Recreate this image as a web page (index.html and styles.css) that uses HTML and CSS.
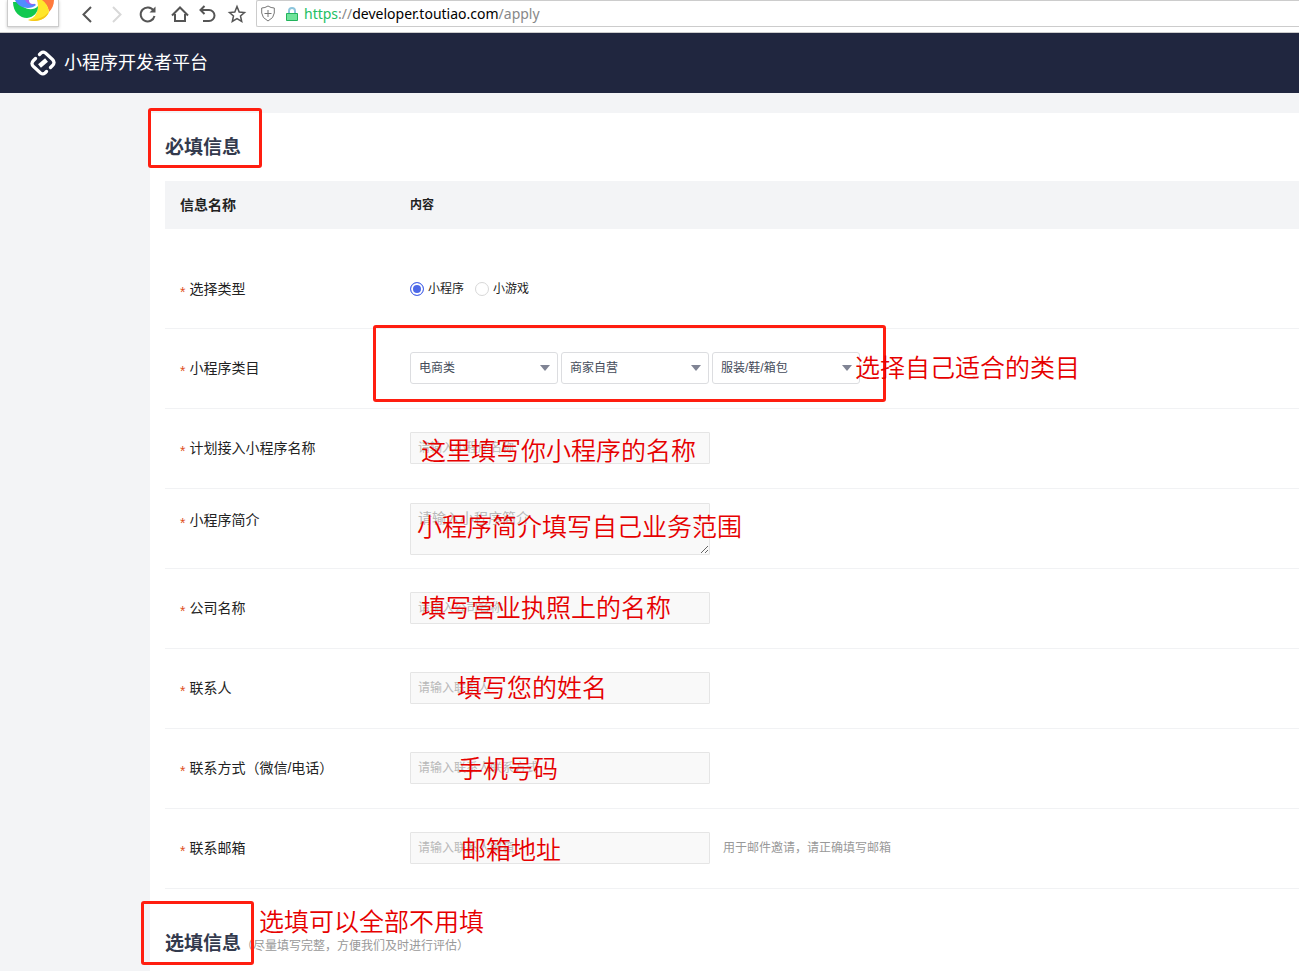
FILE: index.html
```html
<!DOCTYPE html>
<html lang="zh-CN">
<head>
<meta charset="utf-8">
<title>小程序开发者平台</title>
<link rel="stylesheet" href="styles.css">
</head>
<body>
<div class="browser">
  <div class="brand">
    <svg width="42" height="24" viewBox="0 0 42 24" aria-hidden="true">
      <path d="M27 0H41C41 5 39 9 36 12Q35 4 27 0Z" fill="#ff7a3c"/>
      <path d="M24 0H29Q35 4 36 12C33 19 25 23 15 20Q24 18 25 7Q25 3 24 0Z" fill="#ffe62b"/>
      <path d="M36 12C33 19 25 23 15 20Q29 20 36 12Z" fill="#f5c518"/>
      <path d="M0 2C0 12 7 18 14 18C21 17 25 13 25 6C20 12 9 9 6 2Z" fill="#12c94f"/>
      <path d="M2 0H18L23 5C18 10 6 9 2 0Z" fill="#518cff"/>
      <path d="M12 0H18L21 5Q14 5 12 0Z" fill="#a45cf0"/>
      <circle cx="20" cy="0" r="4" fill="#fff"/>
    </svg>
  </div>
  <nav class="tools" aria-label="浏览器">
    <button class="tool" aria-label="后退"><svg width="20" height="20" viewBox="0 0 20 20"><path d="M14 3L6.500 10.500L14 18"/></svg></button>
    <button class="tool tool-off" aria-label="前进"><svg width="20" height="20" viewBox="0 0 20 20"><path d="M6 3L13.500 10.500L6 18"/></svg></button>
    <button class="tool" aria-label="刷新"><svg width="20" height="20" viewBox="0 0 20 20"><path d="M16.500 6.500A7 7 0 1 0 17.500 12"/><path class="solid" d="M18.500 2.500V8.500H12.500Z"/></svg></button>
    <button class="tool tool-home" aria-label="主页"><svg width="20" height="20" viewBox="0 0 20 20"><path d="M2 11.500L10 3.500L18 11.500M5 10V17H15V10"/></svg></button>
    <button class="tool" aria-label="撤销"><svg width="20" height="20" viewBox="0 0 20 20"><path d="M7.500 2L3.500 6L7.500 10M4 6H12A5.500 5.500 0 0 1 12 17H6"/></svg></button>
    <button class="tool" aria-label="收藏"><svg width="20" height="20" viewBox="0 0 20 20"><path class="thin" d="M10 2.500L12.200 8L17.500 8.500L13.500 12L14.700 17.500L10 14.700L5.300 17.500L6.500 12L2.500 8.500L7.800 8Z"/></svg></button>
  </nav>
  <div class="address">
    <svg width="14" height="17" viewBox="0 0 14 17" fill="none" stroke="#777" aria-hidden="true"><path d="M7 1Q10 3 13.300 3V8Q13 13 7 16Q1 13 .7 8V3Q4 3 7 1ZM7 5V12M3.500 8.500H10.500"/></svg>
    <svg width="12" height="14" viewBox="0 0 12 14" aria-hidden="true"><path d="M3 7V4A3 3 0 0 1 9 4V7" fill="none" stroke="#8cc5dc" stroke-width="2"/><path d="M.5 6.500H11.500V13.500H.5Z" fill="#6fe39a" stroke="#21b35b"/></svg>
    <span class="url"><span class="scheme">https</span>://<span class="host">developer.toutiao.com</span>/apply</span>
  </div>
</div>

<header class="header">
  <svg width="26" height="26" viewBox="0 0 26 26" fill="none" stroke="#fff" stroke-width="3.200" stroke-linecap="round" stroke-linejoin="round" aria-hidden="true"><path d="M9.500 4.500L11 3Q13 1.200 15.500 3L22.500 9.500Q25.500 12.500 22.500 15.500L20.500 17.500M16.500 21.500L15 23Q13 24.800 10.500 23L3.500 16.500Q.5 13.500 3.500 10.500L5.500 8.500"/><path d="M9.500 16L16.500 10" stroke-linecap="butt" stroke-width="4.500"/></svg>
  <span>小程序开发者平台</span>
</header>

<main class="main">
  <form class="panel">
    <h2 class="title">必填信息</h2>
    <div class="row head"><span class="name">信息名称</span><span>内容</span></div>
    <div class="row first">
      <span class="name required">选择类型</span>
      <label class="radio"><input type="radio" name="kind" checked>小程序</label>
      <label class="radio"><input type="radio" name="kind">小游戏</label>
    </div>
    <div class="row">
      <label class="name required" for="cat">小程序类目</label>
      <div class="selects">
        <select id="cat"><option>电商类</option></select>
        <select aria-label="二级类目"><option>商家自营</option></select>
        <select aria-label="三级类目"><option>服装/鞋/箱包</option></select>
      </div>
    </div>
    <div class="row"><label class="name required" for="app">计划接入小程序名称</label><input class="field" id="app" placeholder="请输入小程序名称"></div>
    <div class="row intro"><label class="name required" for="intro">小程序简介</label><textarea class="field" id="intro" placeholder="请输入小程序简介"></textarea></div>
    <div class="row"><label class="name required" for="company">公司名称</label><input class="field" id="company" placeholder="请输入公司名称"></div>
    <div class="row"><label class="name required" for="person">联系人</label><input class="field" id="person" placeholder="请输入联系人"></div>
    <div class="row"><label class="name required" for="phone">联系方式（微信/电话）</label><input class="field" id="phone" placeholder="请输入联系人联系方式"></div>
    <div class="row"><label class="name required" for="mail">联系邮箱</label><input class="field" id="mail" placeholder="请输入联系人邮箱"><span class="hint">用于邮件邀请，请正确填写邮箱</span></div>
    <div class="optional"><h2 class="title">选填信息</h2><span class="note">（尽量填写完整，方便我们及时进行评估）</span></div>
  </form>
</main>

<div class="box box-required"></div>
<div class="box box-category"></div>
<div class="box box-optional"></div>
<p class="mark mark-category">选择自己适合的类目</p>
<p class="mark mark-app">这里填写你小程序的名称</p>
<p class="mark mark-intro">小程序简介填写自己业务范围</p>
<p class="mark mark-company">填写营业执照上的名称</p>
<p class="mark mark-person">填写您的姓名</p>
<p class="mark mark-phone">手机号码</p>
<p class="mark mark-mail">邮箱地址</p>
<p class="mark mark-optional">选填可以全部不用填</p>
</body>
</html>
```
FILE: styles.css
```css
* { box-sizing: border-box; }
html { overflow: hidden; }
body {
  margin: 0;
  position: relative;
  background: #f3f4f6;
  color: #222;
  font: 14px/20px "Liberation Sans", "Noto Sans CJK SC", sans-serif;
}
button, input, select, textarea { font: inherit; color: inherit; }

.browser {
  display: flex;
  height: 33px;
  background: #fff;
  border-bottom: 1px solid #ccc;
}
.brand {
  width: 52px;
  height: 27px;
  margin-left: 7px;
  padding-left: 5px;
  border: 1px solid #ccc;
  border-top: 0;
  box-shadow: 0 1px 3px #ccc;
}
.tools { display: flex; gap: 10px; margin-left: 18px; padding-top: 4px; height: 24px; }
.tool { display: flex; width: 20px; padding: 0; border: 0; background: none; }
.tool-home { width: 22px; padding-left: 3px; margin-right: -2px; }
.tool svg { flex: none; fill: none; stroke: #555; stroke-width: 2; }
.tool .thin { stroke-width: 1.5; }
.tool .solid { fill: #555; stroke: none; }
.tool-off svg { stroke: #d8d8d8; }
.address {
  display: flex;
  flex: 1;
  align-items: center;
  gap: 11px;
  height: 27px;
  margin-left: 9px;
  padding-left: 4px;
  border: 1px solid #ccc;
  border-right: 0;
  border-radius: 2px 0 0 2px;
}
.url { margin-left: -5px; color: #888; font: 14px/20px "Noto Sans", sans-serif; }
.scheme { color: #22c064; }
.host { color: #000; }

.header {
  display: flex;
  align-items: center;
  gap: 8px;
  height: 60px;
  padding-left: 30px;
  background: #20263f;
  color: #fff;
  font-size: 18px;
}

.main { padding: 20px 0 0 150px; }
.panel { padding-left: 15px; background: #fff; }
.title { margin: 0; color: #333a4d; font-size: 19px; line-height: 28px; }
.panel > .title { padding: 21px 0 19px; }
.row {
  display: flex;
  align-items: center;
  height: 80px;
  padding-bottom: 1px;
  border-bottom: 1px solid #f1f2f4;
}
.head {
  height: 48px;
  border: 0;
  background: #f3f4f6;
  font-size: 12px;
  font-weight: bold;
}
.first { height: 100px; padding: 20px 0 0; }
.name { width: 245px; padding-left: 15px; font-size: 14px; }
.required::before {
  content: "*";
  margin-right: 4px;
  color: #e0501c;
  line-height: 1;
  vertical-align: -3px;
}
.radio { display: flex; align-items: center; gap: 4px; margin-right: 11px; font-size: 12px; }
.radio input {
  appearance: none;
  width: 14px;
  height: 14px;
  margin: 0;
  border: 1px solid #d8d8d8;
  border-radius: 50%;
}
.radio input:checked { border-color: #4d68e8; background: #4d68e8; box-shadow: inset 0 0 0 2px #fff; }
.selects { display: flex; gap: 3px; }
select {
  appearance: none;
  width: 148px;
  height: 32px;
  padding: 0 8px;
  border: 1px solid #dcdde0;
  border-radius: 3px;
  background: #fff url("data:image/svg+xml,%3Csvg xmlns='http://www.w3.org/2000/svg' width='10' height='6'%3E%3Cpath d='M0 0H10L5 6Z' fill='%23808494'/%3E%3C/svg%3E") no-repeat right 7px center;
  color: #444b59;
  font-size: 12px;
}
.field {
  width: 300px;
  height: 32px;
  padding: 0 7px;
  border: 1px solid #e5e5e5;
  border-radius: 1px;
  background: #f9f9f9;
  font-size: 12px;
}
.field::placeholder { color: #b8b8b8; }
textarea.field { height: 52px; padding: 4px 7px; font-size: 14px; }
.intro { align-items: flex-start; padding-top: 14px; }
.intro .name { padding-top: 7px; }
.hint { margin-left: 13px; color: #999; font-size: 12px; }
.optional { display: flex; align-items: center; padding: 41px 0 15px; }
.note { color: #999; font-size: 12px; padding-top: 4px; }

.box { position: absolute; border: 3px solid #ff1e10; border-radius: 3px; }
.box-required { left: 148px; top: 108px; width: 114px; height: 60px; }
.box-category { left: 373px; top: 325px; width: 513px; height: 77px; }
.box-optional { left: 141px; top: 901px; width: 113px; height: 64px; }
.mark {
  position: absolute;
  margin: 0;
  color: #e60000;
  font: 350 25px/32px "Noto Sans CJK SC", sans-serif;
  white-space: nowrap;
  pointer-events: none;
}
.mark-category { left: 855px; top: 350px; }
.mark-app { left: 421px; top: 433px; }
.mark-intro { left: 417px; top: 509px; }
.mark-company { left: 421px; top: 590px; }
.mark-person { left: 457px; top: 670px; }
.mark-phone { left: 458px; top: 751px; }
.mark-mail { left: 461px; top: 832px; }
.mark-optional { left: 259px; top: 904px; }
```
